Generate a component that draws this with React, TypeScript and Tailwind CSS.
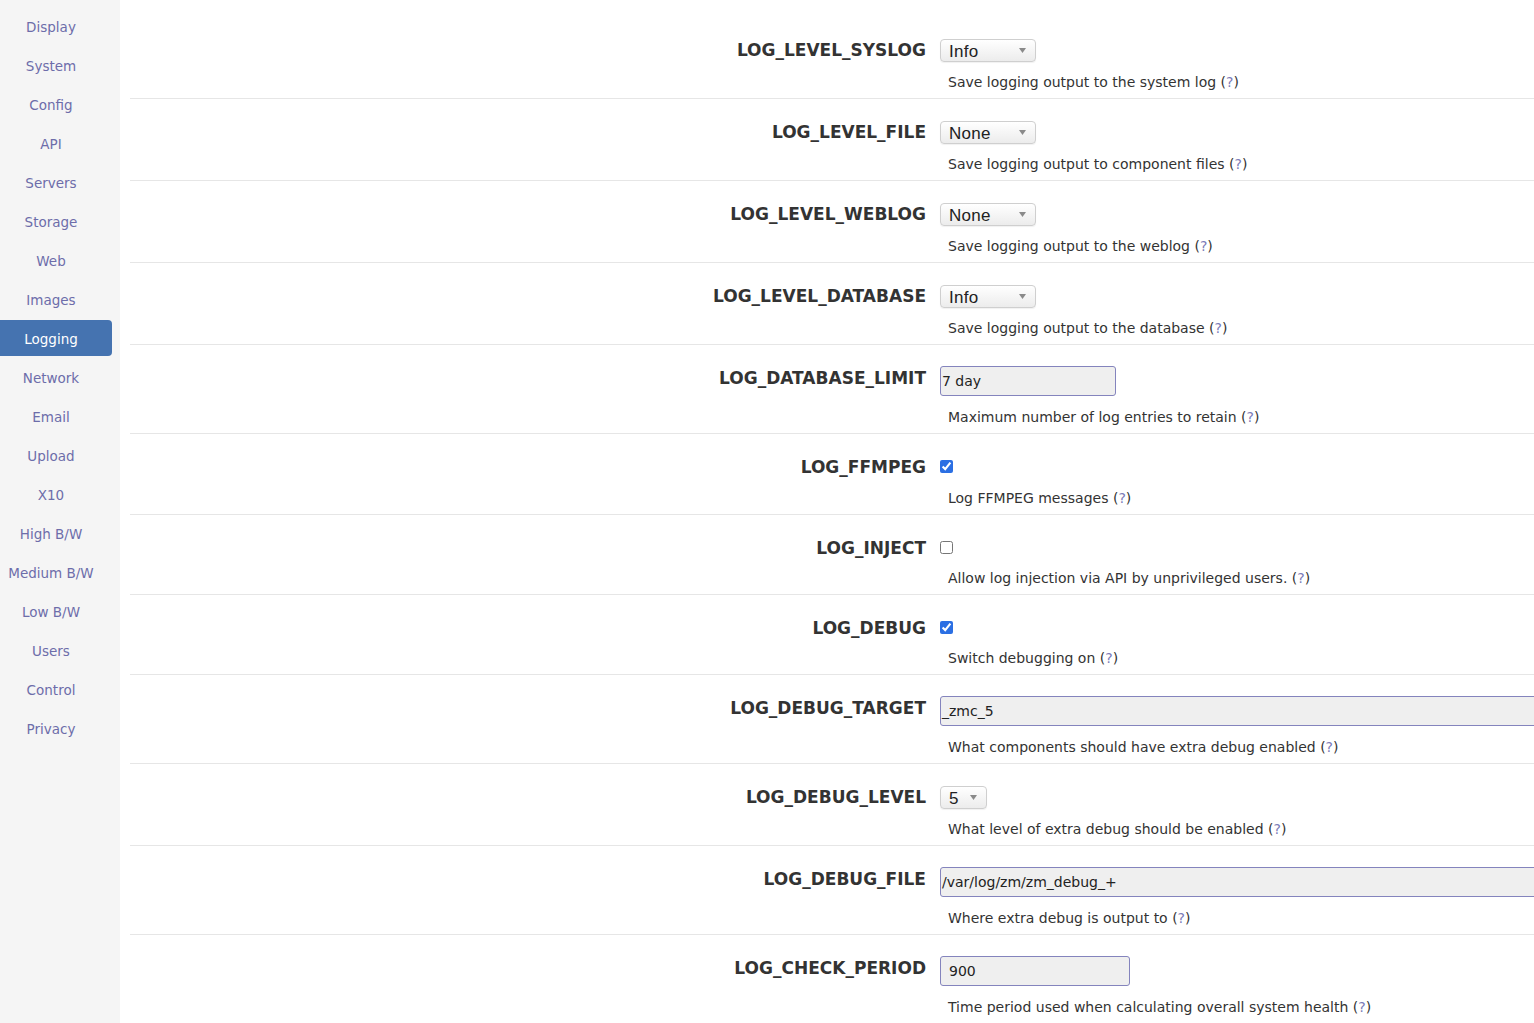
import React from 'react'

const navItems = [
  'Display', 'System', 'Config', 'API', 'Servers', 'Storage', 'Web', 'Images', 'Logging',
  'Network', 'Email', 'Upload', 'X10', 'High B/W', 'Medium B/W', 'Low B/W', 'Users', 'Control', 'Privacy',
]

type Option =
  | { name: string; kind: 'select'; value: string; width: string; desc: string }
  | { name: string; kind: 'text'; value: string; width: string; padded?: boolean; desc: string }
  | { name: string; kind: 'check'; checked: boolean; gap: string; desc: string }

const options: Option[] = [
  { name: 'LOG_LEVEL_SYSLOG', kind: 'select', value: 'Info', width: 'w-[96px]', desc: 'Save logging output to the system log' },
  { name: 'LOG_LEVEL_FILE', kind: 'select', value: 'None', width: 'w-[96px]', desc: 'Save logging output to component files' },
  { name: 'LOG_LEVEL_WEBLOG', kind: 'select', value: 'None', width: 'w-[96px]', desc: 'Save logging output to the weblog' },
  { name: 'LOG_LEVEL_DATABASE', kind: 'select', value: 'Info', width: 'w-[96px]', desc: 'Save logging output to the database' },
  { name: 'LOG_DATABASE_LIMIT', kind: 'text', value: '7 day', width: 'w-[176px]', desc: 'Maximum number of log entries to retain' },
  { name: 'LOG_FFMPEG', kind: 'check', checked: true, gap: 'mt-[12px]', desc: 'Log FFMPEG messages' },
  { name: 'LOG_INJECT', kind: 'check', checked: false, gap: 'mt-[11px]', desc: 'Allow log injection via API by unprivileged users.' },
  { name: 'LOG_DEBUG', kind: 'check', checked: true, gap: 'mt-[11px]', desc: 'Switch debugging on' },
  { name: 'LOG_DEBUG_TARGET', kind: 'text', value: '_zmc_5', width: 'w-[640px]', desc: 'What components should have extra debug enabled' },
  { name: 'LOG_DEBUG_LEVEL', kind: 'select', value: '5', width: 'w-[47px]', desc: 'What level of extra debug should be enabled' },
  { name: 'LOG_DEBUG_FILE', kind: 'text', value: '/var/log/zm/zm_debug_+', width: 'w-[640px]', desc: 'Where extra debug is output to' },
  { name: 'LOG_CHECK_PERIOD', kind: 'text', value: '900', width: 'w-[190px]', padded: true, desc: 'Time period used when calculating overall system health' },
]

const Desc: React.FC<{ text: string; gap: string }> = ({ text, gap }) => (
  <div className={`${gap} pl-2 h-5 text-[14px] leading-5 text-[#333] whitespace-nowrap`}>
    {text} (<span className="text-[#7b7bb8]">?</span>)
  </div>
)

const Control: React.FC<{ opt: Option }> = ({ opt }) => {
  if (opt.kind === 'select') {
    return (
      <div className="pt-[22px]">
        <div
          className={`${opt.width} h-[23px] flex items-center justify-between pl-2 pr-[9px] rounded-[4px] border border-[#cfcfcf] bg-gradient-to-b from-white to-[#ececec] shadow-[0_1px_1px_rgba(0,0,0,0.06)]`}
        >
          <span className="pt-[2px] text-[17px] leading-none text-[#222] tracking-[0.3px] font-['Liberation_Sans',sans-serif]">{opt.value}</span>
          <svg width="7" height="5" viewBox="0 0 7 5" className="mt-[-1px]">
            <path d="M0 0 L7 0 L3.5 5 Z" fill="#8a8a8a" />
          </svg>
        </div>
        <Desc text={opt.desc} gap="mt-[10px]" />
      </div>
    )
  }
  if (opt.kind === 'text') {
    return (
      <div className="pt-[21px]">
        <div
          className={`${opt.width} h-[30px] flex items-center pt-[1px] ${opt.padded ? 'pl-2' : 'pl-[1px]'} rounded-[3px] border border-[#8484bd] bg-[#efefef] text-[14px] text-[#222]`}
        >
          {opt.value}
        </div>
        <Desc text={opt.desc} gap="mt-[11px]" />
      </div>
    )
  }
  return (
    <div className="pt-[22px]">
      <div className="h-5 flex items-center">
        <input
          type="checkbox"
          defaultChecked={opt.checked}
          className="w-[13px] h-[13px] m-0 accent-[#2b6fe3]"
        />
      </div>
      <Desc text={opt.desc} gap={opt.gap} />
    </div>
  )
}

export default function App() {
  return (
    <div className="flex w-screen h-screen overflow-hidden bg-white font-['DejaVu_Sans',Verdana,sans-serif]">
      <nav className="w-[120px] shrink-0 bg-[#f5f5f5] pt-2">
        {navItems.map(item => (
          <div
            key={item}
            className={`h-9 mb-[3px] mr-2 pr-[10px] pt-[2px] flex items-center justify-center text-[13.5px] rounded-r-[4px] ${
              item === 'Logging' ? 'bg-[#4573b0] text-white' : 'text-[#6d6daa]'
            }`}
          >
            {item}
          </div>
        ))}
      </nav>
      <main className="flex-1 ml-[10px] pt-[17px] min-w-0">
        {options.map(opt => (
          <div key={opt.name} className="flex border-b border-[#e6e6e6] last:border-b-0">
            <div className="w-[796px] shrink-0 pt-[23px] text-right text-[17px] leading-5 font-bold text-[#333]">
              {opt.name}
            </div>
            <div className="ml-[14px] pb-[6px]">
              <Control opt={opt} />
            </div>
          </div>
        ))}
      </main>
    </div>
  )
}
